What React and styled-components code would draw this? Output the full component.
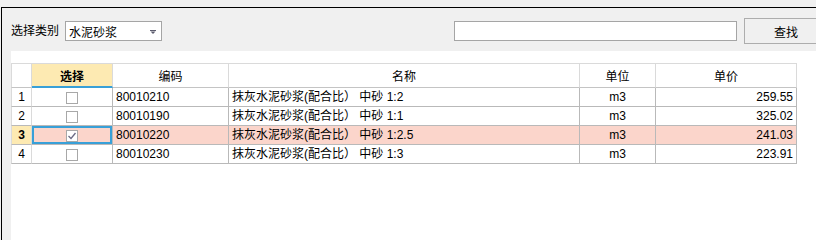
import styled, { createGlobalStyle } from 'styled-components';

const GlobalStyle = createGlobalStyle`
  html, body {
    margin: 0;
    padding: 0;
    overflow: hidden;
    background: #f0f0f0;
  }
  body {
    width: 816px;
    font-family: "Liberation Sans", "Noto Sans CJK SC", sans-serif;
    font-size: 12px;
    color: #000;
  }
`;

const rows = [
  { no: 1, code: '80010210', name: '抹灰水泥砂浆(配合比） 中砂 1:2', unit: 'm3', price: '259.55' },
  { no: 2, code: '80010190', name: '抹灰水泥砂浆(配合比） 中砂 1:1', unit: 'm3', price: '325.02' },
  { no: 3, code: '80010220', name: '抹灰水泥砂浆(配合比） 中砂 1:2.5', unit: 'm3', price: '241.03', checked: true, current: true },
  { no: 4, code: '80010230', name: '抹灰水泥砂浆(配合比） 中砂 1:3', unit: 'm3', price: '223.91' },
];

// 열 너비 (오른쪽 테두리 포함)
const cols = [21, 81, 116, 351, 76, 141];

const App = () => {
  return (
    <>
      <GlobalStyle />
      <Window>
        <Toolbar>
          <Label>选择类别</Label>
          <Combo>
            <span>水泥砂浆</span>
            <ComboArrow width="6" height="4" viewBox="0 0 6 4">
              <rect x="0" y="0" width="6" height="1" fill="#5c5c6e" />
              <path d="M0.5 1.5 H5.5 L3 4 Z" fill="#5c5c6e" />
            </ComboArrow>
          </Combo>
          <SearchInput />
          <SearchButton>查找</SearchButton>
        </Toolbar>
        <GridPanel>
          <Table>
            <colgroup>
              {cols.map((w, i) => (
                <col key={i} style={{ width: w }} />
              ))}
            </colgroup>
            <thead>
              <tr>
                <HeadCell />
                <HeadCell $active>选择</HeadCell>
                <HeadCell>编码</HeadCell>
                <HeadCell>名称</HeadCell>
                <HeadCell>单位</HeadCell>
                <HeadCell>单价</HeadCell>
              </tr>
            </thead>
            <tbody>
              {rows.map((row) => (
                <tr key={row.no}>
                  <NoCell $current={row.current}>{row.no}</NoCell>
                  <CheckCell $current={row.current}>
                    <CheckBox>
                      {row.checked && (
                        <svg width="10" height="10" viewBox="0 0 10 10">
                          <path d="M1.5 5 L4 7.5 L8.5 2" fill="none" stroke="#6b6b85" strokeWidth="1.3" />
                        </svg>
                      )}
                    </CheckBox>
                  </CheckCell>
                  <Cell $current={row.current}>{row.code}</Cell>
                  <Cell $current={row.current}>{row.name}</Cell>
                  <Cell $current={row.current} $align="center">{row.unit}</Cell>
                  <Cell $current={row.current} $align="right">{row.price}</Cell>
                </tr>
              ))}
            </tbody>
          </Table>
        </GridPanel>
      </Window>
    </>
  );
};

const Window = styled.div`
  display: flex;
  flex-direction: column;
  box-sizing: border-box;
  margin: 7px 0 0 1px;
  height: calc(100vh - 7px);
  min-height: 216px;
  border-top: 1px solid #000;
  border-left: 1px solid #000;
  background: #f0f0f0;
`;

const Toolbar = styled.div`
  display: flex;
  align-items: center;
  padding: 10px 0 7px 9px;
  height: 26px;
  flex-shrink: 0;
  & > * {
    flex-shrink: 0;
  }
`;

const Label = styled.span`
  line-height: 20px;
  margin-right: 6px;
  white-space: nowrap;
`;

const Combo = styled.div`
  display: flex;
  align-items: center;
  justify-content: space-between;
  box-sizing: border-box;
  width: 97px;
  height: 20px;
  padding: 0 5px 0 3px;
  border: 1px solid #a5a5a5;
  background: #fff;
`;

const ComboArrow = styled.svg`
  display: block;
  margin-top: 1px;
`;

const SearchInput = styled.input`
  box-sizing: border-box;
  width: 283px;
  height: 20px;
  margin: 0 0 0 292px;
  padding: 0;
  border: 1px solid #a5a5a5;
  background: #fff;
  outline: none;
`;

const SearchButton = styled.button`
  box-sizing: border-box;
  width: 84px;
  height: 26px;
  margin-left: 7px;
  border: 1px solid #adadad;
  background: #f0f0f0;
  font-family: inherit;
  font-size: 12px;
  color: #000;
  padding: 0;
`;

const GridPanel = styled.div`
  flex: 1;
  margin-left: 9px;
  padding-top: 12px;
  background: #fff;
`;

const Table = styled.table`
  border-collapse: separate;
  border-spacing: 0;
  table-layout: fixed;
  width: 786px;
  border-top: 1px solid #dadada;
`;

const HeadCell = styled.th`
  box-sizing: border-box;
  height: 24px;
  padding: 0;
  font-weight: ${(p) => (p.$active ? 'bold' : 'normal')};
  text-align: center;
  background: ${(p) => (p.$active ? '#fdeab2' : '#fff')};
  border-right: 1px solid #dadada;
  border-bottom: ${(p) => (p.$active ? '2px solid #38a0d8' : '1px solid #c4c4c4')};
  &:first-child {
    border-left: 1px solid #dadada;
  }
`;

const Cell = styled.td`
  box-sizing: border-box;
  height: 19px;
  padding: 0 3px;
  line-height: 18px;
  white-space: nowrap;
  overflow: hidden;
  text-align: ${(p) => p.$align || 'left'};
  background: ${(p) => (p.$current ? '#fbd5cb' : '#fff')};
  border-right: 1px solid #b9b9b9;
  border-bottom: 1px solid #b9b9b9;
`;

const NoCell = styled(Cell)`
  text-align: center;
  font-weight: ${(p) => (p.$current ? 'bold' : 'normal')};
  background: ${(p) => (p.$current ? '#fdeab2' : '#fff')};
  border-left: 1px solid #dadada;
  border-right-color: #dadada;
`;

const CheckCell = styled(Cell)`
  text-align: center;
  box-shadow: ${(p) => (p.$current ? 'inset 0 0 0 2px #38a0d8' : 'none')};
`;

const CheckBox = styled.span`
  display: inline-flex;
  align-items: center;
  justify-content: center;
  box-sizing: border-box;
  width: 12px;
  height: 12px;
  vertical-align: middle;
  border: 1px solid #a8a8a8;
  background: #fff;
`;

export default App;
